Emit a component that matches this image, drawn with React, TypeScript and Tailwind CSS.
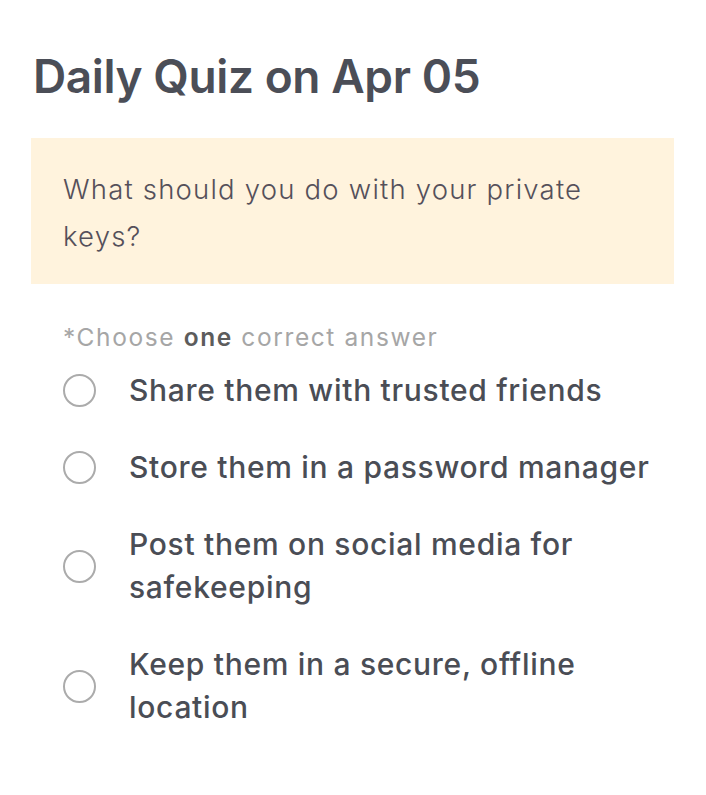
const options = [
  'Share them with trusted friends',
  'Store them in a password manager',
  'Post them on social media for safekeeping',
  'Keep them in a secure, offline location',
];

export default function App() {
  return (
    <div className="min-h-screen bg-white px-[31px] pt-[48px] font-['Inter',sans-serif]">
      <h1 className="pl-[2px] text-[46px] font-semibold leading-[56px] tracking-[-0.4px] text-[#4b4e57]">
        Daily Quiz on Apr 05
      </h1>

      <div className="mt-[34px] w-[643px] bg-[#fff3dd] pl-[32px] pr-[40px] pt-[28px] pb-[24px]">
        <p className="text-[27.5px] font-light leading-[47px] tracking-[1.2px] text-[#55505a]">
          What should you do with your private keys?
        </p>
      </div>

      <div className="mt-[38px] pl-[32px] text-[24.5px] leading-[30px] tracking-[1.6px] text-[#a6a6a6]">
        *Choose <span className="font-semibold text-[#5c5c5c]">one</span> correct answer
      </div>

      <div className="mt-[17px] flex flex-col gap-[34px] pl-[32px]">
        {options.map((opt) => (
          <label key={opt} className="flex items-center gap-[33px]">
            <span className="h-[33px] w-[33px] shrink-0 rounded-full border-[2.5px] border-[#ababab]" />
            <span className="w-[545px] text-[30px] font-medium leading-[43px] tracking-[0.7px] text-[#4a4d55]">
              {opt}
            </span>
          </label>
        ))}
      </div>
    </div>
  );
}
